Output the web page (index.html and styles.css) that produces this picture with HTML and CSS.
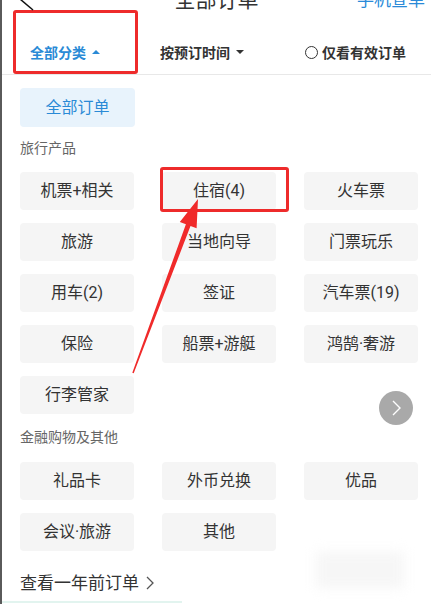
FILE: index.html
```html
<!DOCTYPE html>
<html lang="zh-CN">
<head>
    <meta charset="UTF-8">
    <meta name="viewport" content="width=device-width, initial-scale=1.0">
    <title>全部订单</title>
    <link rel="stylesheet" href="styles.css">
</head>
<body>
    <div class="page">
        <div class="topbar">
            <span></span>
            <span class="title">全部订单</span>
            <span class="phone-link">手机查单</span>
        </div>

        <div class="tabs">
            <div class="tab active">全部分类 <i class="caret up"></i></div>
            <div class="tab">按预订时间 <i class="caret down"></i></div>
            <div class="tab"><i class="radio"></i>仅看有效订单</div>
        </div>

        <div class="content">
            <div class="chip chip-all">全部订单</div>

            <div class="section-label">旅行产品</div>
            <div class="chip-grid">
                <div class="chip">机票+相关</div>
                <div class="chip">住宿(4)</div>
                <div class="chip">火车票</div>
                <div class="chip">旅游</div>
                <div class="chip">当地向导</div>
                <div class="chip">门票玩乐</div>
                <div class="chip">用车(2)</div>
                <div class="chip">签证</div>
                <div class="chip">汽车票(19)</div>
                <div class="chip">保险</div>
                <div class="chip">船票+游艇</div>
                <div class="chip">鸿鹄·奢游</div>
                <div class="chip">行李管家</div>
            </div>

            <div class="section-label second">金融购物及其他</div>
            <div class="chip-grid tight">
                <div class="chip">礼品卡</div>
                <div class="chip">外币兑换</div>
                <div class="chip">优品</div>
                <div class="chip">会议·旅游</div>
                <div class="chip">其他</div>
            </div>

            <div class="old-orders">查看一年前订单
                <svg width="10" height="14" viewBox="0 0 10 14"><polyline points="2,1 8,7 2,13" fill="none" stroke="#555" stroke-width="1.3"/></svg>
            </div>
        </div>

        <!-- overlays: annotations on top of the screenshot -->
        <div class="next-btn">
            <svg width="12" height="16" viewBox="0 0 12 16"><polyline points="3,1 10,8 3,15" fill="none" stroke="#fff" stroke-width="1.4"/></svg>
        </div>
        <div class="blur-patch"></div>
        <div class="bottom-line"></div>
        <div class="mark mark-tab"></div>
        <div class="mark mark-hotel"></div>
        <svg class="annot" width="431" height="604" viewBox="0 0 431 604">
            <line x1="20" y1="-1" x2="33" y2="10" stroke="#111" stroke-width="1.5"/>
            <polygon points="132.3,372.7 185.9,224.3 179.8,222.1 198,199 196.6,228.3 190.5,226.1 133.7,373.3" fill="#f02a2a"/>
        </svg>
    </div>
</body>
</html>
```

FILE: styles.css
```css
body {
    margin: 0;
    font-family: Roboto, "Noto Sans CJK SC", sans-serif;
    color: #333;
    background: #fff;
}
.page {
    position: relative;
    width: 429px;
    height: 604px;
    overflow: hidden;
    border-left: 2px solid #5a5a5a;
}
.topbar {
    height: 30px;
    display: grid;
    grid-template-columns: 1fr auto 1fr;
    align-items: start;
}
.title {
    margin-top: -14px;
    line-height: 28px;
    font-size: 21px;
    color: #333;
}
.phone-link {
    margin-top: -12px;
    line-height: 24px;
    font-size: 17px;
    color: #2a8ad8;
    text-align: right;
    padding-right: 6px;
}
.tabs {
    height: 44px;
    display: grid;
    grid-template-columns: 130px 145px auto;
    align-items: center;
    padding-left: 28px;
    border-bottom: 1px solid #e8e8e8;
    font-size: 14px;
    font-weight: bold;
    color: #333;
}
.tab {
    display: flex;
    align-items: center;
}
.tab.active {
    color: #2a8ad6;
}
.caret {
    width: 0;
    height: 0;
    margin-left: 6px;
    border-left: 4px solid transparent;
    border-right: 4px solid transparent;
}
.caret.up {
    border-bottom: 4px solid #2a8ad6;
}
.caret.down {
    border-top: 4px solid #333;
}
.radio {
    width: 11px;
    height: 11px;
    border: 1px solid #333;
    border-radius: 50%;
    margin-right: 4px;
}
.content {
    padding: 13px 0 0 18px;
}
.chip {
    height: 38px;
    line-height: 38px;
    border-radius: 4px;
    background: #f5f5f5;
    text-align: center;
    font-size: 16px;
    color: #333;
}
.chip-all {
    width: 115px;
    height: 39px;
    line-height: 39px;
    background: #e8f3fc;
    color: #2a8ad6;
}
.section-label {
    margin-top: 10px;
    line-height: 22px;
    font-size: 14px;
    color: #666;
}
.section-label.second {
    margin-top: 12px;
}
.chip-grid {
    margin-top: 13px;
    display: grid;
    grid-template-columns: repeat(3, 114px);
    column-gap: 28px;
    row-gap: 13px;
}
.chip-grid.tight {
    margin-top: 14px;
}
.old-orders {
    margin-top: 20px;
    line-height: 24px;
    font-size: 17px;
    color: #333;
    display: flex;
    align-items: center;
    gap: 6px;
}
.next-btn {
    position: absolute;
    left: 377px;
    top: 391px;
    width: 34px;
    height: 34px;
    border-radius: 50%;
    background: #a9a9a9;
    display: flex;
    align-items: center;
    justify-content: center;
}
.blur-patch {
    position: absolute;
    left: 314px;
    top: 552px;
    width: 88px;
    height: 36px;
    background: #f6f6f6;
    filter: blur(6px);
}
.bottom-line {
    position: absolute;
    left: 0;
    bottom: 1px;
    width: 180px;
    height: 2px;
    background: #e2f4ef;
}
.mark {
    position: absolute;
    border: 3px solid #ee2b2b;
    border-radius: 3px;
    box-sizing: border-box;
}
.mark-tab {
    left: 11px;
    top: 10px;
    width: 125px;
    height: 64px;
}
.mark-hotel {
    left: 158px;
    top: 167px;
    width: 129px;
    height: 45px;
}
.annot {
    position: absolute;
    left: -2px;
    top: 0;
}
```
